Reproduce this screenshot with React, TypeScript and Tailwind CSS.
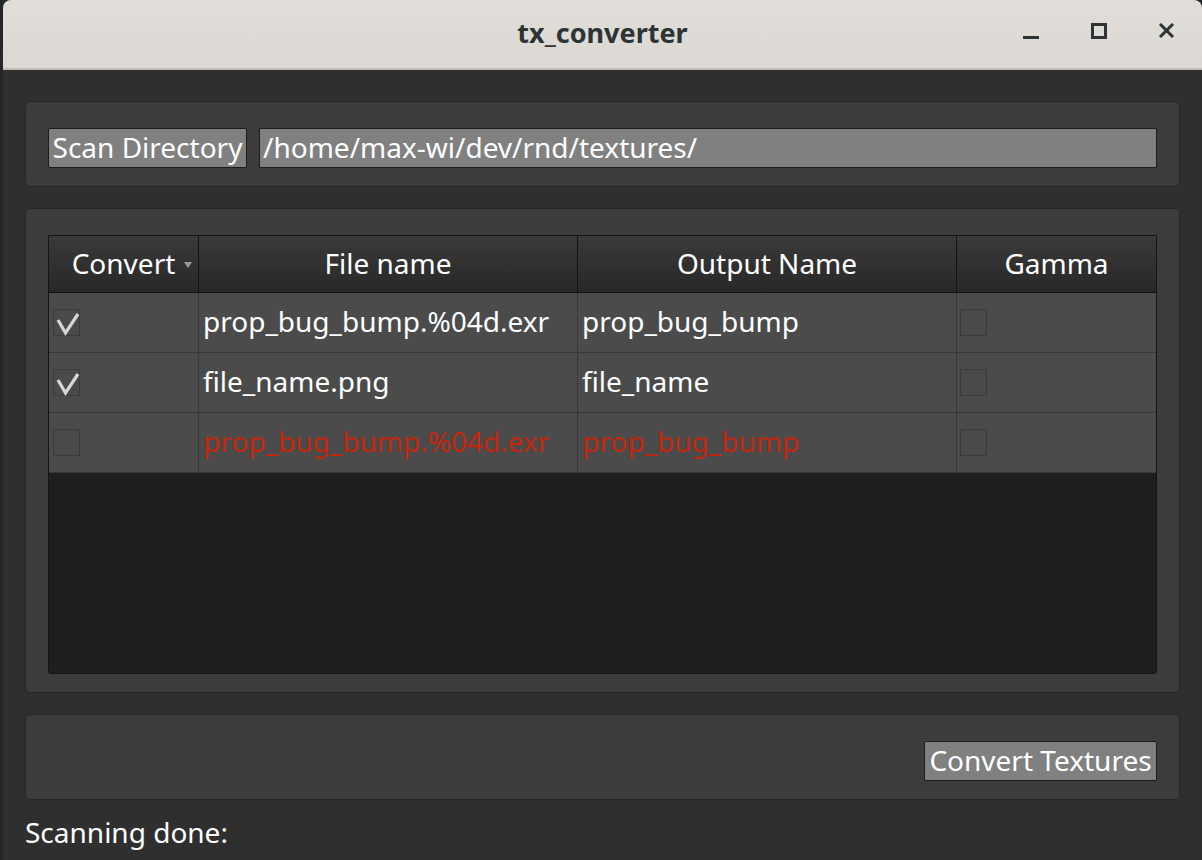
import React from 'react';

const font = { fontFamily: '"Noto Sans", "Open Sans", sans-serif' };

const rows = [
    { checked: true, file: 'prop_bug_bump.%04d.exr', out: 'prop_bug_bump', error: false },
    { checked: true, file: 'file_name.png', out: 'file_name', error: false },
    { checked: false, file: 'prop_bug_bump.%04d.exr', out: 'prop_bug_bump', error: true },
];

const CheckBox = ({ checked }: { checked: boolean }) => (
    <div className="w-[27px] h-[27px] border border-[#3a3a3a] bg-[#4a4a4a] relative">
        {checked && (
            <svg width="27" height="27" viewBox="0 0 27 27" className="absolute -left-px -top-px">
                <path d="M5 11 L12.5 24 L25 5" fill="none" stroke="#d6d6d6" strokeWidth="3.2" strokeLinejoin="miter" />
            </svg>
        )}
    </div>
);

const Panel = ({ children, className = '' }: { children: React.ReactNode; className?: string }) => (
    <div className={`bg-[#3c3c3c] border border-[#262626] rounded-[5px] px-[22px] pt-[26px] pb-[18px] ${className}`}>
        {children}
    </div>
);

export default function App() {
    return (
        <div className="w-[1202px] h-[860px] bg-[#23272b] flex overflow-hidden text-white" style={font}>
            <div className="ml-[3px] flex-1 flex flex-col bg-[#2f2f2f] rounded-t-[8px] overflow-hidden">
                {/* Title bar */}
                <div className="h-[70px] shrink-0 bg-gradient-to-b from-[#e1deda] to-[#dbd8d4] border-b-2 border-[#c2bbb3] relative flex items-center justify-center">
                    <span className="text-[27px] font-bold text-[#2e3436] -mt-[2px]">tx_converter</span>
                    <div className="absolute right-0 top-0 h-full">
                        <svg width="18" height="18" viewBox="0 0 18 18" className="absolute left-[-180px] top-[22px]">
                            <rect x="1" y="14" width="16" height="3" fill="#2e3436" />
                        </svg>
                        <svg width="18" height="18" viewBox="0 0 18 18" className="absolute left-[-111px] top-[23px]">
                            <rect x="1.5" y="1.5" width="13" height="13" fill="none" stroke="#2e3436" strokeWidth="3" />
                        </svg>
                        <svg width="18" height="18" viewBox="0 0 18 18" className="absolute left-[-44px] top-[23px]">
                            <path d="M2 1 L15 14 M15 1 L2 14" stroke="#2e3436" strokeWidth="3" />
                        </svg>
                    </div>
                </div>

                {/* Body */}
                <div className="flex-1 flex flex-col px-[22px] pt-[31px]">
                    <Panel>
                        <div className="flex gap-[12px] h-[40px]">
                            <button className="w-[199px] h-[40px] bg-[#808080] border border-[#1c1c1c] rounded-[2px] text-[28px] leading-none text-white pb-[3px] whitespace-nowrap">
                                Scan Directory
                            </button>
                            <div className="flex-1 h-[40px] bg-[#808080] border border-[#1c1c1c] rounded-[2px] text-[28px] leading-none flex items-center pl-[3px] pb-[3px]">
                                /home/max-wi/dev/rnd/textures/
                            </div>
                        </div>
                    </Panel>

                    <Panel className="mt-[21px]">
                        <div className="h-[439px] border border-[#151515] rounded-b-[3px] bg-[#1e1e1e] flex flex-col text-[28px] overflow-hidden">
                            {/* Header */}
                            <div className="grid grid-cols-[150px_379px_379px_1fr] h-[57px] shrink-0 bg-gradient-to-b from-[#3a3a3a] to-[#282828] border-b border-[#151515]">
                                <div className="flex items-center justify-center border-r border-[#151515] relative pb-[2px]">
                                    Convert
                                    <svg width="8" height="6" viewBox="0 0 8 6" className="absolute right-[6px] top-[26px]">
                                        <path d="M0 0 L8 0 L4 6 Z" fill="#9a9a9a" />
                                    </svg>
                                </div>
                                <div className="flex items-center justify-center border-r border-[#151515] pb-[2px]">File name</div>
                                <div className="flex items-center justify-center border-r border-[#151515] pb-[2px]">Output Name</div>
                                <div className="flex items-center justify-center pb-[2px]">Gamma</div>
                            </div>
                            {/* Rows */}
                            {rows.map((r, i) => (
                                <div
                                    key={i}
                                    className={`grid grid-cols-[150px_379px_379px_1fr] h-[60px] bg-[#4b4b4b] border-b border-dotted border-[#262626] ${r.error ? 'text-[#c3260b]' : 'text-white'}`}
                                >
                                    <div className="flex items-center pl-[4px] border-r border-dotted border-[#262626]">
                                        <CheckBox checked={r.checked} />
                                    </div>
                                    <div className="flex items-center pl-[4px] border-r border-dotted border-[#262626] pb-[3px] whitespace-nowrap">{r.file}</div>
                                    <div className="flex items-center pl-[4px] border-r border-dotted border-[#262626] pb-[3px] whitespace-nowrap">{r.out}</div>
                                    <div className="flex items-center pl-[3px]">
                                        <CheckBox checked={false} />
                                    </div>
                                </div>
                            ))}
                        </div>
                    </Panel>

                    <Panel className="mt-[21px]">
                        <div className="flex justify-end h-[40px]">
                            <button className="w-[233px] h-[40px] bg-[#808080] border border-[#1c1c1c] rounded-[2px] text-[28px] leading-none text-white pb-[3px] whitespace-nowrap">
                                Convert Textures
                            </button>
                        </div>
                    </Panel>

                    <div className="text-[28px] leading-none mt-[18px]">Scanning done:</div>
                </div>
            </div>
        </div>
    );
}
